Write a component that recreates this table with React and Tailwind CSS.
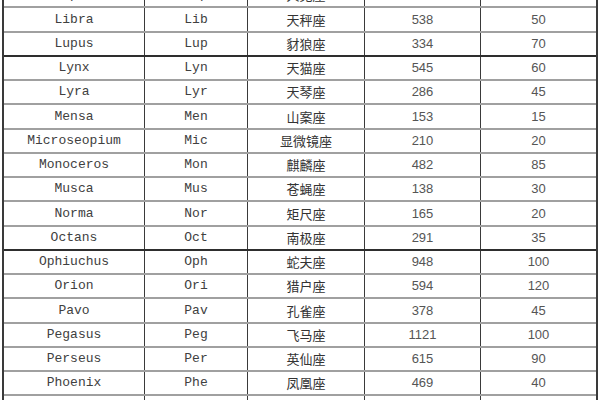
import React from 'react';

const rows = [
  ['Lepus', 'Lep', '天兔座', '290', '40'],
  ['Libra', 'Lib', '天秤座', '538', '50'],
  ['Lupus', 'Lup', '豺狼座', '334', '70'],
  ['Lynx', 'Lyn', '天猫座', '545', '60'],
  ['Lyra', 'Lyr', '天琴座', '286', '45'],
  ['Mensa', 'Men', '山案座', '153', '15'],
  ['Microseopium', 'Mic', '显微镜座', '210', '20'],
  ['Monoceros', 'Mon', '麒麟座', '482', '85'],
  ['Musca', 'Mus', '苍蝇座', '138', '30'],
  ['Norma', 'Nor', '矩尺座', '165', '20'],
  ['Octans', 'Oct', '南极座', '291', '35'],
  ['Ophiuchus', 'Oph', '蛇夫座', '948', '100'],
  ['Orion', 'Ori', '猎户座', '594', '120'],
  ['Pavo', 'Pav', '孔雀座', '378', '45'],
  ['Pegasus', 'Peg', '飞马座', '1121', '100'],
  ['Perseus', 'Per', '英仙座', '615', '90'],
  ['Phoenix', 'Phe', '凤凰座', '469', '40'],
  ['Pictor', 'Pic', '绘架座', '247', '30'],
];

const thick = [2, 10];

const cell = 'flex items-center justify-center text-[13px]';
const mono = "font-['Liberation_Mono','DejaVu_Sans_Mono',monospace]";
const cjk = "font-['Noto_Sans_CJK_SC','Noto_Sans',sans-serif] text-[#333]";
const sans = "font-['Liberation_Sans',Arial,sans-serif] text-[#555]";
const line = 'border-r-[1.5px] border-[#3a3a3a]';

export default function App() {
  return (
    <div className="w-[600px] h-[400px] overflow-hidden bg-white">
      <div className="ml-[2px] w-[596px] -mt-[16px] border-x-2 border-[#3a3a3a] text-[#404040]">
        {rows.map((r, i) => (
          <div
            key={r[0]}
            className={
              thick.includes(i)
                ? 'grid grid-cols-[141px_103px_117px_116px_115px] h-[24.25px] border-b-[2.5px] border-[#2e2e2e]'
                : 'grid grid-cols-[141px_103px_117px_116px_115px] h-[24.25px] border-b-2 border-[#a0a0a0]'
            }
          >
            <div className={`${cell} ${line} ${mono}`}>{r[0]}</div>
            <div className={`${cell} ${line} ${mono}`}>{r[1]}</div>
            <div className={`${cell} ${line} ${cjk}`}>{r[2]}</div>
            <div className={`${cell} ${line} ${sans}`}>{r[3]}</div>
            <div className={`${cell} ${sans}`}>{r[4]}</div>
          </div>
        ))}
      </div>
    </div>
  );
}
